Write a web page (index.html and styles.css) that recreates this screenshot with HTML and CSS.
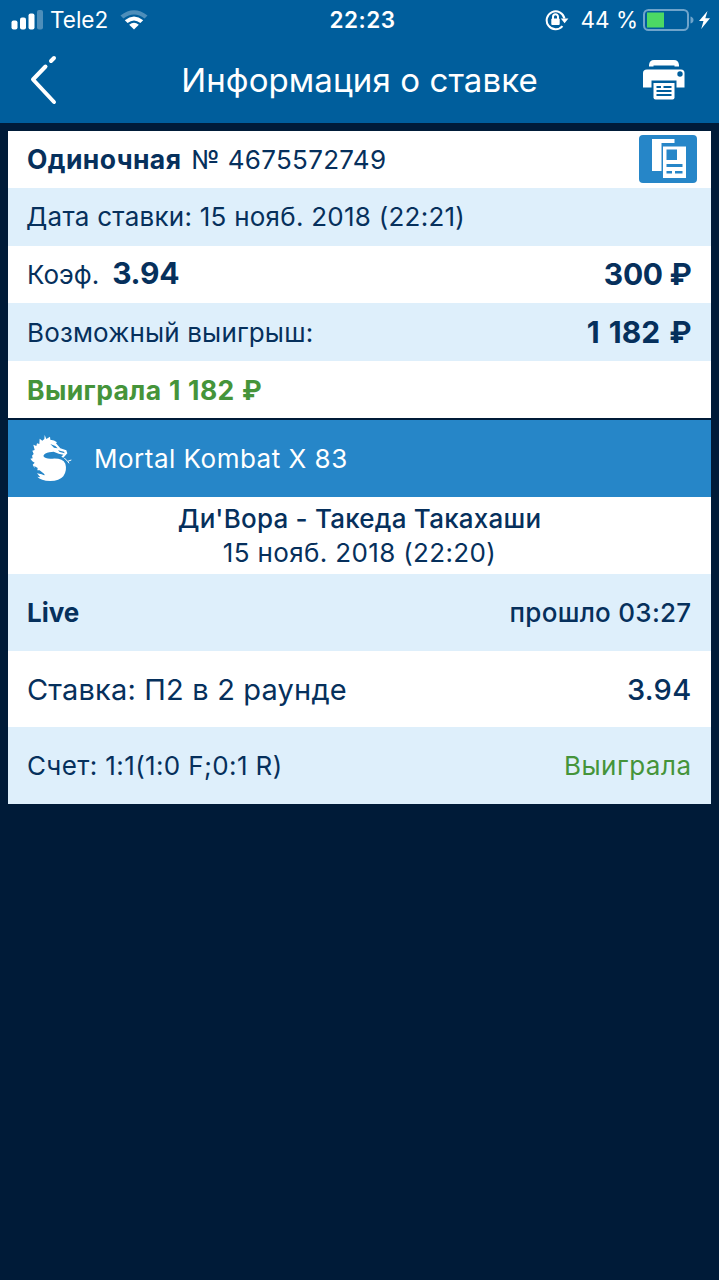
FILE: index.html
```html
<!DOCTYPE html>
<html lang="ru">
<head>
    <meta charset="UTF-8">
    <meta name="viewport" content="width=device-width, initial-scale=1.0">
    <title>Информация о ставке</title>
    <link rel="stylesheet" href="styles.css">
</head>
<body>
    <header>
        <div class="status">
            <div class="status_left">
                <svg class="signal" width="32" height="20" viewBox="0 0 32 20">
                    <rect x="0.5" y="10.5" width="6" height="9" rx="2"/>
                    <rect x="9" y="7.5" width="6" height="12" rx="2"/>
                    <rect x="17.5" y="3.5" width="6" height="16" rx="2"/>
                    <rect class="off" x="26" y="0" width="6" height="19.5" rx="2"/>
                </svg>
                <span class="operator">Tele2</span>
                <svg class="wifi" width="28" height="20" viewBox="0 0 28 20">
                    <path class="off" d="M0.5 5.6Q14-5.2 27.500 5.600L24.600 8.600Q14 0.500 3.400 8.600Z"/>
                    <path d="M4.800 10.200Q14 2.800 23.200 10.200L20.400 13Q14 8 7.600 13Z"/>
                    <path d="M9.200 14.700Q14 11 18.800 14.700L14 19.600Z"/>
                </svg>
            </div>
            <div class="time">22:23</div>
            <div class="status_right">
                <svg class="lock" width="24" height="22" viewBox="0 0 24 22">
                    <path class="line" d="M17.500 17.200A9 9 0 1 1 19.500 9.500"/>
                    <path d="M15.800 9.500H23.400L19.600 14.300Z"/>
                    <rect x="6.300" y="9.500" width="8.400" height="6.500" rx="1"/>
                    <path class="line" d="M8 10V7.700A2.500 2.500 0 0 1 13 7.700V10"/>
                </svg>
                <span class="percent">44 %</span>
                <svg class="battery" width="51" height="22" viewBox="0 0 51 22">
                    <rect class="case" x="1" y="1" width="44" height="20" rx="4.500"/>
                    <rect class="charge" x="4" y="3.500" width="17" height="15"/>
                    <path class="case_end" d="M47.500 7.500Q50.500 8.500 50.500 11T47.500 14.500Z"/>
                </svg>
                <svg class="bolt" width="11" height="18" viewBox="0 0 11 18">
                    <path d="M8.500 0L0 10H4.500L2.200 18L11 7.200H6.300Z"/>
                </svg>
            </div>
        </div>
        <div class="title">
            <svg class="back" width="28" height="50" viewBox="0 0 28 50">
                <path d="M21 6L24 3M15.500 11.500L3 24.500L24 47"/>
            </svg>
            <h1>Информация о ставке</h1>
            <svg class="print" width="42" height="40" viewBox="0 0 42 40">
                <path class="white" d="M6 6.500V5Q6.500 0 11 0H31Q35.500 0 36 5V6.500H31.500V5.500H10.500V6.500Z"/>
                <path class="white" d="M4 9.500H38Q41.500 9.500 41.500 13V27.500H33.500V20.500H8.500V27.500H0V13Q0 9.500 4 9.500Z"/>
                <circle class="blue" cx="37" cy="14" r="2.700"/>
                <path class="white" d="M10.500 23H31.500V37.500Q31.500 39.500 29.500 39.500H12.500Q10.500 39.500 10.500 37.500Z"/>
                <path class="lines" d="M13.500 27H18M20.500 27H28.500M13.500 31H28.500M13.500 35H28.500"/>
            </svg>
        </div>
    </header>

    <div class="container">
        <ul class="bet">
            <li>
                <span><b class="type">Одиночная</b><span class="number">№ 4675572749</span></span>
                <button type="button" class="btn_copy">
                    <svg width="34" height="40" viewBox="0 0 34 40">
                        <path d="M0 0H22.500V4H9.500V32H0Z"/>
                        <path d="M11 7.500H34V39H11Z"/>
                        <path class="blue" d="M14.500 10.500H25V21H14.500ZM14.500 25H30.500V28H14.500ZM14.500 32H20V34.500H14.500ZM23 32H30.500V34.500H23Z"/>
                    </svg>
                </button>
            </li>
            <li><span class="date">Дата ставки: 15 нояб. 2018 (22:21)</span></li>
            <li class="row_koef">
                <span><span class="koef">Коэф.</span><b class="koef_val">3.94</b></span>
                <b class="sum">300 ₽</b>
            </li>
            <li>
                <span class="possible">Возможный выигрыш:</span>
                <b class="sum sum_win">1 182 ₽</b>
            </li>
            <li><b class="win">Выиграла 1 182 ₽</b></li>
        </ul>

        <div class="game">
            <svg class="dragon" width="42" height="46" viewBox="90 78 126 138">
                <path d="M134 78L139 90L150 83L151 92Q163 93 171 100L168 103L181 118L199 124L202 133L190 146L184 143L190 137L176 134L161 128L148 130Q134 132 130 141Q136 151 157 149Q188 147 196 164Q202 184 190 202Q178 216 151 216Q122 215 112 203L121 205L111 193L125 196Q139 202 132 194L119 184L112 184L113 177L103 171L104 178L98 167L104 161L97 157L91 149L98 148L96 140L101 135L97 125L104 123L100 107L109 111L111 103L118 105L119 89L127 95L133 90Z"/>
                <path class="blue" d="M151 105L166 111L173 118L162 116ZM174 124L192 128L194 133L179 129Z"/>
                <path class="tongue" d="M193 147L203 157L214 153M203 157L207 163"/>
            </svg>
            <span class="game_name">Mortal Kombat X 83</span>
        </div>
        <div class="match">
            <div class="players">Ди'Вора - Такеда Такахаши</div>
            <div class="match_date">15 нояб. 2018 (22:20)</div>
        </div>
        <ul class="result">
            <li><b class="live">Live</b><span class="passed">прошло 03:27</span></li>
            <li><span class="stake">Ставка: П2 в 2 раунде</span><span class="stake_val">3.94</span></li>
            <li><span class="score">Счет: 1:1(1:0 F;0:1 R)</span><span class="won">Выиграла</span></li>
        </ul>
    </div>
</body>
</html>
```
FILE: styles.css
```css
*{
    margin: 0;
    padding: 0;
    box-sizing: border-box;
}
body{
    background-color: #001b38;
    color: #06305c;
    font-family: Inter, "Liberation Sans", sans-serif;
    font-size: 26px;
    white-space: nowrap;
}
svg{
    display: block;
    fill: white;
    flex-shrink: 0;
}
header{
    height: 123px;
    background-color: #005e9c;
    color: white;
}
/* строка состояния */
.status{
    display: grid;
    grid-template-columns: 1fr auto 1fr;
    align-items: center;
    height: 39px;
    margin-bottom: 1px;
    padding: 0 9px 0 11px;
    font-size: 22.500px;
}
.status_left, .status_right{
    display: flex;
    align-items: center;
}
.status_right{
    justify-content: flex-end;
}
.off{
    opacity: 0.3;
}
.operator{
    margin-left: 7px;
}
.wifi{
    margin-left: 12px;
}
.time{
    padding-left: 4px;
    font-weight: 600;
    letter-spacing: 0.500px;
}
.line{
    fill: none;
    stroke: white;
    stroke-width: 2;
}
.percent{
    margin: 0 5px 0 13px;
}
.lock{
    margin-right: -1px;
}
.case{
    fill: none;
    stroke: #6fa4cb;
    stroke-width: 2;
}
.case_end{
    fill: #6fa4cb;
}
.charge{
    fill: #4cd964;
}
.bolt{
    margin-left: 5px;
}
/* заголовок */
.title{
    display: flex;
    align-items: center;
    justify-content: space-between;
    height: 80px;
    padding: 0 34px 0 30px;
}
.back{
    fill: none;
    stroke: white;
    stroke-width: 4;
    stroke-linecap: round;
    stroke-linejoin: round;
}
h1{
    padding-left: 18px;
    font-size: 33px;
    font-weight: 400;
    letter-spacing: 0.100px;
}
.print .blue{
    fill: #005e9c;
}
.lines{
    stroke: #005e9c;
    stroke-width: 2;
}
.container{
    width: 703px;
    margin: 7.500px 0 0 8px;
}
ul{
    list-style-type: none;
}
li{
    display: flex;
    align-items: center;
    justify-content: space-between;
    padding: 0 19.500px 0 19px;
    background-color: white;
}
b{
    font-weight: 700;
}
.bet{
    margin-bottom: 1.500px;
}
.bet li{
    height: 57.600px;
}
.bet li:nth-child(even){
    background-color: #deeffb;
}
.type, .win{
    font-size: 26.500px;
    letter-spacing: 0.400px;
}
.number{
    margin-left: 10px;
    letter-spacing: 0.300px;
}
.btn_copy{
    width: 58px;
    height: 48px;
    margin-right: -5px;
    padding-left: 13px;
    border: none;
    border-radius: 4px;
    background-color: #2686c8;
}
.blue{
    fill: #2686c8;
}
.date{
    margin-left: -1px;
    letter-spacing: 0.250px;
}
.koef_val{
    margin-left: 13px;
}
.koef_val, .sum{
    font-size: 30px;
    letter-spacing: -0.300px;
}
.row_koef .sum{
    padding-bottom: 1px;
}
.row_koef > span{
    padding-bottom: 2px;
}
.sum_win{
    letter-spacing: 0;
    word-spacing: 2px;
}
.possible{
    letter-spacing: 0.150px;
}
.win{
    word-spacing: 0.700px;
}
.win, .won{
    color: #45943a;
}
.game{
    display: flex;
    align-items: center;
    height: 77px;
    padding-left: 22px;
    background-color: #2686c8;
    color: white;
}
.game_name{
    margin-left: 22px;
    letter-spacing: 0.500px;
}
.tongue{
    fill: none;
    stroke: white;
    stroke-width: 3;
}
.match{
    height: 77px;
    padding-top: 5px;
    background-color: white;
    line-height: 34.500px;
    text-align: center;
}
.players{
    font-weight: 500;
    letter-spacing: 0.220px;
}
.match_date{
    letter-spacing: 0.350px;
}
.result li{
    height: 76.700px;
}
.result li:nth-child(odd){
    background-color: #deeffb;
}
.passed{
    font-weight: 500;
    letter-spacing: 0.270px;
}
.stake{
    font-size: 29px;
    letter-spacing: 0.180px;
}
.stake_val{
    font-size: 29px;
    font-weight: 500;
    letter-spacing: 0.300px;
}
.score{
    letter-spacing: 0.380px;
}
.won{
    letter-spacing: 0.500px;
}
```
